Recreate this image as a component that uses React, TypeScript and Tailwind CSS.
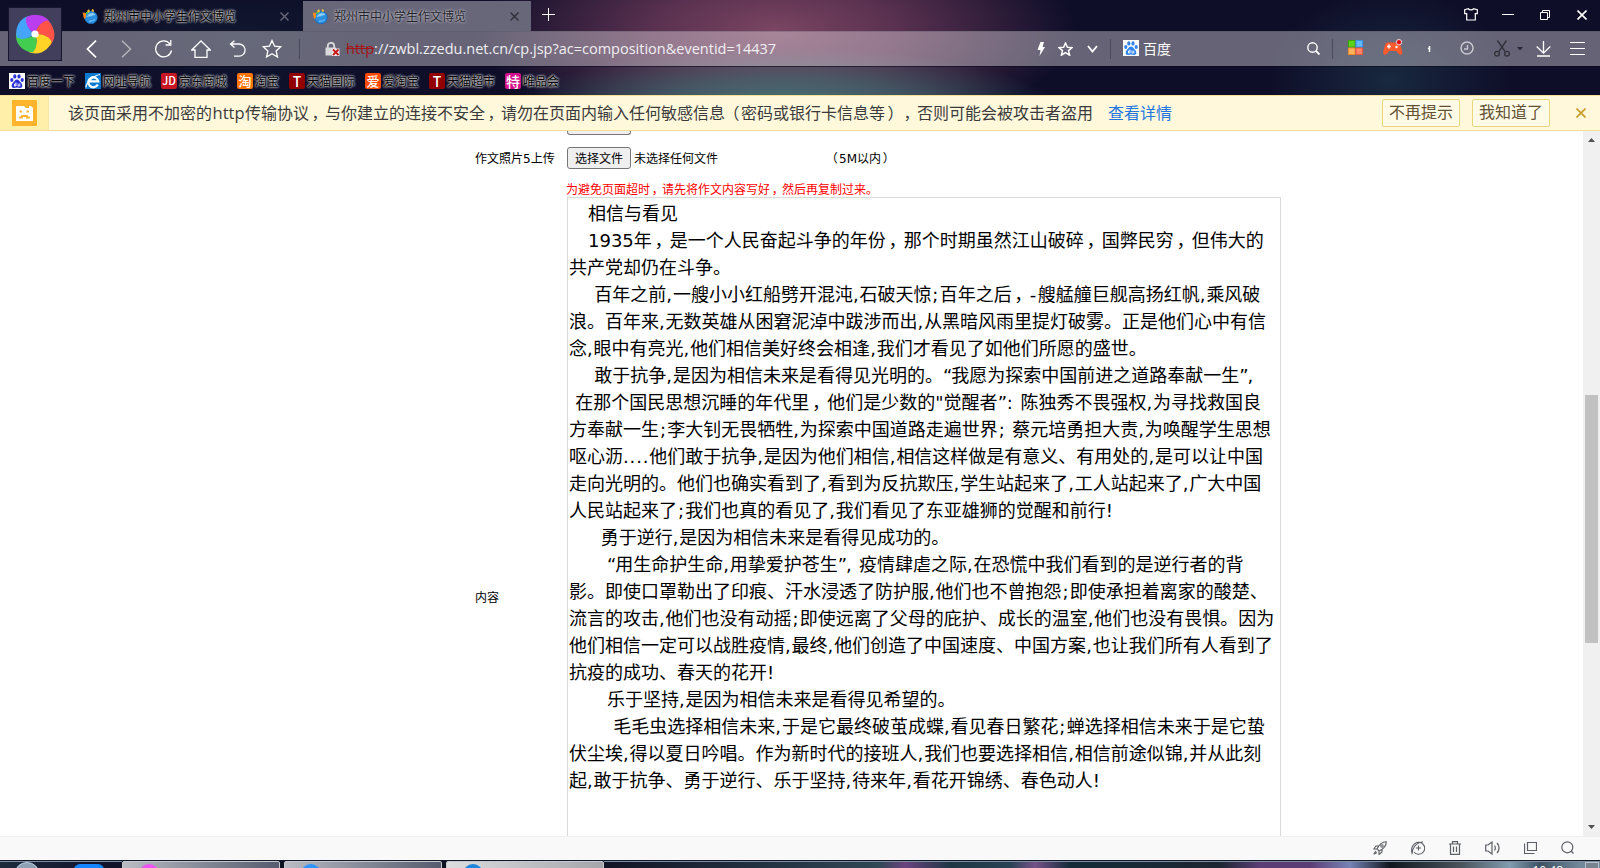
import type { ReactNode } from 'react';
import { clsx } from 'clsx';

const ESSAY = [
  '   相信与看见',
  '   1935年，是一个人民奋起斗争的年份，那个时期虽然江山破碎，国弊民穷，但伟大的',
  '共产党却仍在斗争。',
  '    百年之前,一艘小小红船劈开混沌,石破天惊;百年之后，-艘艋艟巨舰高扬红帆,乘风破',
  '浪。百年来,无数英雄从困窘泥淖中跋涉而出,从黑暗风雨里提灯破雾。正是他们心中有信',
  '念,眼中有亮光,他们相信美好终会相逢,我们才看见了如他们所愿的盛世。',
  '    敢于抗争,是因为相信未来是看得见光明的。“我愿为探索中国前进之道路奉献一生”,',
  ' 在那个国民思想沉睡的年代里，他们是少数的"觉醒者”: 陈独秀不畏强权,为寻找救国良',
  '方奉献一生;李大钊无畏牺牲,为探索中国道路走遍世界; 蔡元培勇担大责,为唤醒学生思想',
  '呕心沥....他们敢于抗争,是因为他们相信,相信这样做是有意义、有用处的,是可以让中国',
  '走向光明的。他们也确实看到了,看到为反抗欺压,学生站起来了,工人站起来了,广大中国',
  '人民站起来了;我们也真的看见了,我们看见了东亚雄狮的觉醒和前行!',
  '     勇于逆行,是因为相信未来是看得见成功的。',
  '      “用生命护生命,用挚爱护苍生”, 疫情肆虐之际,在恐慌中我们看到的是逆行者的背',
  '影。即使口罩勒出了印痕、汗水浸透了防护服,他们也不曾抱怨;即使承担着离家的酸楚、',
  '流言的攻击,他们也没有动摇;即使远离了父母的庇护、成长的温室,他们也没有畏惧。因为',
  '他们相信一定可以战胜疫情,最终,他们创造了中国速度、中国方案,也让我们所有人看到了',
  '抗疫的成功、春天的花开!',
  '      乐于坚持,是因为相信未来是看得见希望的。',
  '       毛毛虫选择相信未来,于是它最终破茧成蝶,看见春日繁花;蝉选择相信未来于是它蛰',
  '伏尘埃,得以夏日吟唱。作为新时代的接班人,我们也要选择相信,相信前途似锦,并从此刻',
  '起,敢于抗争、勇于逆行、乐于坚持,待来年,看花开锦绣、春色动人!',
];

// extra advance per punctuation mark
const SPACING: Record<string, string> = {
  ' ': 'tracking-[0.034em]',
  ',': 'tracking-[0.046em]',
  '.': 'tracking-[0.046em]',
  ';': 'ml-[0.05em] tracking-[0.067em]',
  ':': 'ml-[0.05em] tracking-[0.067em]',
  '-': 'tracking-[0.093em]',
  '“': 'tracking-[-0.059em]',
  '”': 'tracking-[-0.059em]',
  '，': 'inline-block w-[1em] indent-[0.15em]',
  '（': 'inline-block w-[1em] indent-[-0.1em]',
  '）': 'inline-block w-[1em] indent-[0.15em]',
};

function Prose({ text }: { text: string }) {
  return (
    <>
      {text.split(/([ ]+|[,.;:“”，（）-])/).map((part, i) => (
        SPACING[part[0]] ? <span key={i} className={SPACING[part[0]]}>{part}</span> : part
      ))}
    </>
  );
}

const BOOKMARKS = [
  { label: '百度一下', icon: 'paw' },
  { label: '网址导航', icon: 'e' },
  { label: '京东商城', icon: 'JD', color: 'bg-[#c81623] text-[11px]' },
  { label: '淘宝', icon: '淘', color: 'bg-[#ff7300] text-[13px]' },
  { label: '天猫国际', icon: 'T', color: 'bg-[#930000] text-[14px]' },
  { label: '爱淘宝', icon: '爱', color: 'bg-[#ff4a00] text-[13px]' },
  { label: '天猫超市', icon: 'T', color: 'bg-[#930000] text-[14px]' },
  { label: '唯品会', icon: '特', color: 'bg-[#d6108c] text-[14px]' },
];

function Svg({ w, h, className, children }: { w: number; h: number; className?: string; children: ReactNode }) {
  return (
    <svg width={w} height={h} viewBox={`0 0 ${w} ${h}`} fill="none" stroke="currentColor" strokeWidth="1.4" className={clsx('shrink-0', className)}>
      {children}
    </svg>
  );
}

function Paw({ color }: { color: string }) {
  return (
    <Svg w={16} h={16} className="bg-white">
      <g fill={color} stroke="none">
        <ellipse cx="2.8" cy="7" rx="1.6" ry="2" />
        <ellipse cx="5.8" cy="3.4" rx="1.6" ry="2.2" />
        <ellipse cx="10" cy="3.4" rx="1.6" ry="2.2" />
        <ellipse cx="13.2" cy="7" rx="1.6" ry="2" />
        <path d="M8 6.5c2 0 2.6 2 4 3.3 1.800 1.700 2 5.200-1 5.200-1.200 0-2-.4-3-.4s-1.800.4-3 .4c-3 0-2.800-3.500-1-5.200C5.400 8.500 6 6.500 8 6.500z" />
      </g>
      <path d="M7 9.500v3.500H5.500v-2H7M9 10.500v2.500h1.800v-2.500" stroke="#fff" strokeWidth=".9" />
    </Svg>
  );
}

function Globe({ className }: { className?: string }) {
  return (
    <Svg w={16} h={16} className={className}>
      <circle cx="9" cy="9.500" r="6.300" fill="#2b8fe0" stroke="#1766b4" strokeWidth=".8" />
      <path d="M5 8.500c2-3 6-4 8-2-2 0-3 1.500-5 1.500s-2 .5-3 .5z" fill="#8fd0fb" stroke="#8fd0fb" strokeWidth=".8" />
      <path d="M7 13.500c2-.5 4-.5 6-2" stroke="#63b6f2" />
      <path d="M.5 4.500 4 5v4l-1 2C.8 9.500 1.800 7 .5 4.500z" fill="#f58a1c" stroke="none" />
      <path d="m5 3 2-2 1 2.500L6 5zM10 1l2 1-.5 2-2-.5z" fill="#f6c12b" stroke="none" />
      <path d="M4 4h2v2H4z" fill="#47b649" stroke="none" />
    </Svg>
  );
}

function Flower() {
  const petals = ['#bb3df0', '#ff5349', '#ffd426', '#42cc50', '#45a4fb'];
  const petal = 'M0 0C-6-4-10-10-9-16C-4-20 10-22 16-10C9-13 2-9 0 0z';
  return (
    <svg width="42" height="42" viewBox="-21 -21 42 42">
      {petals.map((fill, i) => (
        <path key={fill} transform={`rotate(${i * 72})`} fill={fill} d={petal} />
      ))}
      {/* the top petal tucks over the blue one again */}
      <path fill="#bb3df0" d="M0 0C-6-4-10-10-9-16C-6-19-2-19.500 2-18.500L2-6z" />
      <circle r="3.600" fill="#fff" />
    </svg>
  );
}

function Tab({ active }: { active?: boolean }) {
  return (
    <div className={clsx('mt-px flex h-[30px] w-[228px] items-center pl-[9px]', active && 'bg-[#686679]')}>
      <Globe />
      <span className={clsx('ml-1.5 w-[132px] text-xs whitespace-nowrap', active ? 'text-[#24242c] [text-shadow:0_0_3px_#d0d0dd,0_0_2px_#aaa]' : 'text-black [text-shadow:0_0_2px_#ccc,0_0_2px_#ccc,0_0_3px_#bbb]')}>
        郑州市中小学生作文博览
      </span>
      <Svg w={9} h={9} className={clsx('ml-11', active ? 'text-[#2e2e38]' : 'text-[#686876]')}>
        <path d="m.5.5 8 8m0-8-8 8" strokeWidth="1.400" />
      </Svg>
    </div>
  );
}

function TitleBar() {
  return (
    <div className="flex h-[31px] pl-[73px] text-white">
      <Tab />
      <div className="w-0.5" />
      <Tab active />
      <Svg w={13} h={13} className="mt-2 ml-[11px]"><path d="M6.500 0v13M0 6.500h13" strokeWidth="1" /></Svg>
      <div className="ml-auto flex h-[29px] items-center pr-[13px]">
        <Svg w={14} h={13}><path d="M4.500.7c.5 1.500 4.500 1.500 5 0l3.800 1v4h-2V12H2.700V5.700h-2v-4z" strokeWidth="1.200" /></Svg>
        <Svg w={12} h={3} className="ml-6"><path d="M0 1.500h12" strokeWidth="1" /></Svg>
        <Svg w={10} h={10} className="ml-[26px]"><path d="M.5 2.500h7v7h-7zM2.500 2.500v-2h7v7h-2" strokeWidth="1" /></Svg>
        <Svg w={10} h={10} className="ml-[27px]"><path d="m.5.5 9 9m0-9-9 9" strokeWidth="1.600" /></Svg>
      </div>
    </div>
  );
}

function Toolbar() {
  return (
    <div className="flex h-[35px] items-center bg-[#f4eef4]/38 pl-[86px] text-white shadow-[inset_0_1px_0_rgba(80,80,100,.3)]">
      <Svg w={11} h={18}><path d="M10 .7 1.500 9l8.500 8.300" strokeWidth="1.700" /></Svg>
      <Svg w={11} h={18} className="ml-6 opacity-50"><path d="M1 .7 9.500 9 1 17.300" strokeWidth="1.500" /></Svg>
      <Svg w={19} h={19} className="ml-[22px]"><path d="M17.500 11.500A8 8 0 1 1 16 5M16.800 1v5h-5.200" strokeWidth="1.300" /></Svg>
      <Svg w={20} h={18} className="ml-[18px]"><path d="M.7 10 10 1l9.300 9H16v7.300H4V10z" strokeWidth="1.300" /></Svg>
      <Svg w={17} h={17} className="ml-[18px]"><path d="M5.500.7 1.500 4l4 3.500M1.500 4H10a6 6 0 0 1 0 12.200H5" strokeWidth="1.300" /></Svg>
      <Svg w={20} h={19} className="ml-4"><path d="m10 1.500 2.600 5.700 6.200.6-4.700 4.100 1.400 6.100L10 14.800 4.500 18l1.400-6.100-4.700-4.100 6.200-.6z" strokeWidth="1.300" /></Svg>
      <div className="ml-[17px] h-5 w-px bg-[#4b4a5c]" />
      <Svg w={15} h={14} className="ml-[25px]">
        <path d="M2.800 6V4a3.200 3.200 0 0 1 6.400 0v2" stroke="#d8d8dd" strokeWidth="1.800" />
        <path d="M.5 5.500h10.500v8H.5z" fill="#d8d8dd" stroke="none" />
        <path d="M7 6.500h7.500V14H7z" fill="#e9e9ee" stroke="none" />
        <path d="m8 7.500 5.500 5.500m0-5.500L8 13" stroke="#c81818" strokeWidth="1.800" />
      </Svg>
      <div className="ml-1.5 w-[435px] font-['Open_Sans'] text-[14.500px] whitespace-nowrap text-[#f0eff3]">
        <span className="text-[#a51515] line-through">http</span>://zwbl.zzedu.net.cn/cp.jsp?ac=composition&amp;eventid=14437
      </div>
      <Svg w={8} h={14} className="ml-64"><path d="M3.500 0H7L5.500 5H8L2.500 14l1-6H.5z" fill="currentColor" stroke="none" /></Svg>
      <Svg w={15} h={14} className="ml-[13px]"><path d="m7.500 1 1.900 4.200 4.600.4-3.500 3 1.100 4.600-4.100-2.500-4.100 2.500 1.100-4.600L1 5.600l4.600-.4z" strokeWidth="1.500" /></Svg>
      <Svg w={11} h={8} className="ml-3.5"><path d="m1 1 4.500 5.500L10 1" strokeWidth="1.800" /></Svg>
      <div className="ml-3 h-5 w-px bg-[#4b4a5c]" />
      <div className="mb-px ml-3 flex items-center gap-1 text-sm"><Paw color="#2f83ee" />百度</div>
      <Svg w={13} h={13} className="ml-auto"><circle cx="5.500" cy="5.500" r="4.700" /><path d="m9 9 3.500 3.500" strokeWidth="1.800" /></Svg>
      <div className="ml-3 h-5 w-px bg-[#4b4a5c]" />
      <Svg w={15} h={15} className="mr-5 mb-0.5 ml-[15px]">
        <g strokeWidth="1">
          <path d="M.5.5h6.500v6.500H.5z" fill="#5ed31e" stroke="#3aa506" />
          <path d="M8 .5h6.500v6.500H8z" fill="#63b8ff" stroke="#3494ea" />
          <path d="M.5 8h6.500v6.500H.5z" fill="#ffb35c" stroke="#f28c28" />
          <path d="M8 8h6.500v6.500H8z" fill="#ff8468" stroke="#ed573b" />
        </g>
      </Svg>
      <Svg w={20} h={17} className="mb-0.5">
        <path d="M5 3.500h9c2 0 3 1 3.500 3L19.300 13c.4 3-2.500 3.600-4 1.500l-2-2.500H6.200l-2 2.500C2.700 16.600-.2 16 .2 13L2 6c.4-1.700 1.200-2.500 3-2.500z" fill="#fb5a2c" stroke="none" />
        <path d="M6 5.500v4M4 7.500h4" stroke="#fff" />
        <circle cx="13.500" cy="8" r="1.200" fill="#fff" stroke="none" />
        <circle cx="16" cy="3.200" r="2.700" fill="#e00d12" stroke="#e7d6dd" strokeWidth="1" />
      </Svg>
      <Svg w={4} h={6} className="mr-[29px] ml-6"><path d="M2.500 0v6M1 2.500h2" strokeWidth="1.500" /></Svg>
      <Svg w={14} h={14} className="mb-0.5 text-[#c9c8d2]"><circle cx="7" cy="7" r="6" strokeWidth="1.500" /><path d="M7.500 4v4H4" /></Svg>
      <Svg w={16} h={17} className="mr-[7px] ml-5 text-[#32323c]">
        <path d="m3.500.5 7.700 11.200M12.500.5 4.800 11.700" /><circle cx="3" cy="13.700" r="2.300" /><circle cx="13" cy="13.700" r="2.300" />
      </Svg>
      <Svg w={6} h={4} className="mr-[13px] text-[#292932]"><path d="M0 0h6L3 3.500z" fill="currentColor" stroke="none" /></Svg>
      <Svg w={15} h={16}><path d="M7.500 0v12M.7 5.500l6.800 6.700 6.800-6.700M1 15h13" strokeWidth="1.300" /></Svg>
      <Svg w={15} h={15} className="mr-[15px] ml-[19px]"><path d="M0 1.500h15M0 7.500h15M0 13.500h15" strokeWidth="1.200" /></Svg>
    </div>
  );
}

function BookmarkBar() {
  return (
    <div className="flex h-[29px] items-center gap-2.5 border-t border-[#090919]/60 pb-px pl-[9px] text-xs">
      {BOOKMARKS.map((b) => (
        <div key={b.label} className="flex items-center gap-0.5 whitespace-nowrap">
          {b.icon === 'paw' && <Paw color="#2d32d8" />}
          {b.icon === 'e' && (
            <Svg w={16} h={16} className="bg-[#0a79cf]">
              <path d="M12.800 11.500A5 5 0 1 1 13.200 8.300H4" stroke="#fff" strokeWidth="2.300" />
              <path d="M1 14.500C.5 11 8 2.500 15 1.500" stroke="#fff" strokeWidth="1.200" />
            </Svg>
          )}
          {b.color && (
            <span className={clsx('flex size-4 items-center justify-center rounded-xs leading-none font-medium text-white', b.color)}>{b.icon}</span>
          )}
          <span className="text-black [text-shadow:0_0_2px_#ccc,0_0_2px_#ccc,0_0_3px_#bbb]">{b.label}</span>
        </div>
      ))}
    </div>
  );
}

function Notice() {
  return (
    <div className="flex h-9 items-center border-y border-[#f5df94] bg-[#fff8db] text-base whitespace-nowrap text-[#3b3b3b]">
      <div className="flex h-full w-[49px] items-center justify-center border-r border-[#f7e7a9] bg-[#ffefa9]">
        <Svg w={25} h={26}>
          <rect width="25" height="26" rx="1" fill="#ffb42c" stroke="none" />
          <path d="M4 6h8l2 2h3V6h2l2 2v13H4z" fill="#fff" stroke="none" />
          <path d="M7.500 11.500h2.500M14.500 11.500h2.500M8 18.500v-1h2v-1.500h5v1.500h2v1" stroke="#ffb42c" strokeWidth="1.800" />
        </Svg>
      </div>
      <span className="mt-px ml-[19px] w-[1026px] font-['Open_Sans','Noto_Sans_CJK_SC',sans-serif]">
        该页面采用不加密的<span className="inline-block w-[33px] text-center text-[16.500px]">http</span>
        <Prose text="传输协议，与你建立的连接不安全，请勿在页面内输入任何敏感信息（密码或银行卡信息等），否则可能会被攻击者盗用" />
      </span>
      <a className="mt-px ml-3.5 text-[#2376e0]">查看详情</a>
      <button className="ml-auto h-7 w-[78px] rounded-xs border border-[#e9d67b] bg-[#fffbe6] text-[#625233]">不再提示</button>
      <button className="ml-3 h-7 w-[78px] rounded-xs border border-[#e9d67b] bg-[#fffbe6] text-[#625233]">我知道了</button>
      <Svg w={10} h={10} className="mr-3.5 ml-[26px] text-[#c79c22]"><path d="m.5.5 9 9m0-9-9 9" strokeWidth="1.600" /></Svg>
    </div>
  );
}

function UploadForm() {
  return (
    <div className="flex-1 overflow-hidden pl-[475px] text-xs text-black">
      <div className="ml-[92px] h-1 w-16 rounded-b-[3px] border border-t-0 border-[#767676] bg-[#efefef]" />
      <div className="mt-3 flex h-[22px] items-center whitespace-nowrap">
        <span className="w-[92px] pt-0.5">作文照片5上传</span>
        <button className="h-[22px] w-16 rounded-[3px] border border-[#767676] bg-[#efefef] pt-0.5">选择文件</button>
        <span className="ml-[3px] w-[193px] pt-0.5">未选择任何文件</span>
        <span className="pt-0.5"><Prose text="（5M以内）" /></span>
      </div>
      <div className="mt-[13px] ml-[91px] h-[15px] leading-4 whitespace-nowrap text-[#ff0000]">
        <Prose text="为避免页面超时，请先将作文内容写好，然后再复制过来。" />
      </div>
      <div className="flex">
        <span className="mt-[393px] w-[92px]">内容</span>
        <div className="h-[800px] w-[714px] border border-[#d9d9d9] px-px pt-0.5">
          {ESSAY.map((line, i) => (
            <div key={i} className="h-[27px] text-lg leading-[27px] whitespace-pre"><Prose text={line} /></div>
          ))}
        </div>
      </div>
    </div>
  );
}

function Scrollbar() {
  return (
    <div className="flex w-[17px] flex-col items-center bg-[#f0f0f0] text-[#505050]">
      <Svg w={7} h={4} className="mt-[7px]"><path d="M0 4h7L3.500 0z" fill="currentColor" stroke="none" /></Svg>
      <div className="mt-[253px] h-[248px] w-[13px] bg-[#c1c1c1]" />
      <Svg w={7} h={4} className="mt-auto mb-[7px]"><path d="M0 0h7L3.500 4z" fill="currentColor" stroke="none" /></Svg>
    </div>
  );
}

function StatusBar() {
  return (
    <div className="flex h-6 items-center justify-end gap-6 border-t border-[#efefef] bg-[#f9f9f9] pr-[26px] pb-px text-[#5c5f66]">
      <Svg w={14} h={14}>
        <g strokeWidth="1.100"><path d="M13.300.7C9 .7 6 3.500 4 8l2 2c4.500-2 7.300-5 7.300-9.300zM5.500 5H3L.8 8H4M9 8.500V11l-3 2.500V10M3 10l-2.300 3.300L4 11.500" /><circle cx="9" cy="5" r="1.200" /></g>
      </Svg>
      <Svg w={14} h={14}>
        <g strokeWidth="1.100"><path d="M4 2.500a6 6 0 1 1-1 8.500M1 13.300C1 8 4 2 12 .8M1 12C0 8 1 3 6 1.200M7.500 4.500v5M5 7h5" /></g>
      </Svg>
      <Svg w={12} h={14}><path d="M0 3h12M3.500 3V.7h5V3M1.500 3v10.300h9V3M4.500 5.500v5.500M7.500 5.500v5.500" strokeWidth="1.200" /></Svg>
      <Svg w={15} h={14}><path d="M.7 4v6H3l4 3V1L3 4zM9.500 4.500c1 1.500 1 3.500 0 5M12 2c2.500 3 2.500 7 0 10" strokeWidth="1.200" /></Svg>
      <Svg w={13} h={14}><path d="M3.500 1.500h9v8h-9zM.5 2.500v10h10" strokeWidth="1.200" /></Svg>
      <Svg w={13} h={14}><circle cx="6.300" cy="6.300" r="5.500" strokeWidth="1.200" /><path d="m10 10 2.500 2.500" strokeWidth="1.200" /></Svg>
    </div>
  );
}

function Taskbar() {
  const dots = ['bg-[#ee52f2]', 'bg-[#2f94fb]', 'bg-[#1d85dc]'];
  return (
    <div className="flex h-2 overflow-hidden border-t border-[#10182a] bg-[linear-gradient(90deg,#1d2b3d_0,#10122a_110px,#111425_604px,#263847_800px,#314756_880px,#69437e_905px,#1f3745_950px,#274253_1010px,#74528a_1035px,#142b38_1070px,#1c2632_1220px,#5b3d75_1260px,#5b3d75_1310px,#7583b5_1350px,#10171f_1390px,#47525a_1460px,#819caf_1510px,#3e5263_1540px,#71889a_1580px)] shadow-[inset_0_1px_0_#7e8c9c]">
      <div className="mt-px ml-3.5 size-[26px] shrink-0 rounded-full border border-[#bcd2e5] bg-[#8fa2b5]" />
      <div className="mt-[3px] ml-[34px] h-6 w-[30px] shrink-0 rounded-md bg-[#1484ff] pt-1">
        <div className="mx-auto h-3 w-2.5 rounded-full bg-white" />
      </div>
      <div className="ml-[18px] flex gap-1 bg-[#0d1220]">
        {dots.map((dot, i) => (
          <div key={dot} className={clsx('h-6 w-[158px] rounded-t-xs border border-[#c5c8cd] pt-0.5 pl-4', i === 2 ? 'bg-linear-to-r from-[#dcdddf] to-[#a3a5ab]' : 'bg-linear-to-r from-[#b9bcc4] to-[#565c6e]')}>
            <div className={clsx('size-5 rounded-full', dot)} />
          </div>
        ))}
      </div>
      <span className="ml-auto h-3 shrink-0 pt-1 font-['Open_Sans'] text-xs leading-3 text-white">10:48</span>
      <div className="mt-px mr-px ml-[22px] h-6 w-3.5 shrink-0 border border-[#b6c0ca] bg-[#77838f]" />
    </div>
  );
}

export default function App() {
  return (
    <div className="flex h-[868px] w-[1600px] flex-col overflow-hidden bg-white font-['DejaVu_Sans','Noto_Sans_CJK_SC',sans-serif]">
      {/* Browser chrome */}
      <header className="relative h-[95px] shrink-0 bg-[#0f0e29] bg-[radial-gradient(ellipse_270px_60px_at_785px_108px,#487678_0,#48767899_50%,transparent_100%),radial-gradient(ellipse_300px_110px_at_775px_30px,#7a4562_0,#5a3150_40%,transparent_100%),radial-gradient(ellipse_120px_90px_at_1390px_80px,#18293f_0,transparent_100%),radial-gradient(ellipse_160px_60px_at_240px_40px,#10182f_0,transparent_100%)] font-['Noto_Sans_CJK_SC',sans-serif]">
        <TitleBar />
        <Toolbar />
        <BookmarkBar />
        <div className="absolute top-[7px] left-2 flex size-[54px] items-center justify-center border border-[#17162f] bg-[#413f5b]">
          <Flower />
        </div>
      </header>

      <Notice />

      {/* Page */}
      <main className="flex min-h-0 flex-1">
        <UploadForm />
        <Scrollbar />
      </main>

      <StatusBar />
      <Taskbar />
    </div>
  );
}
